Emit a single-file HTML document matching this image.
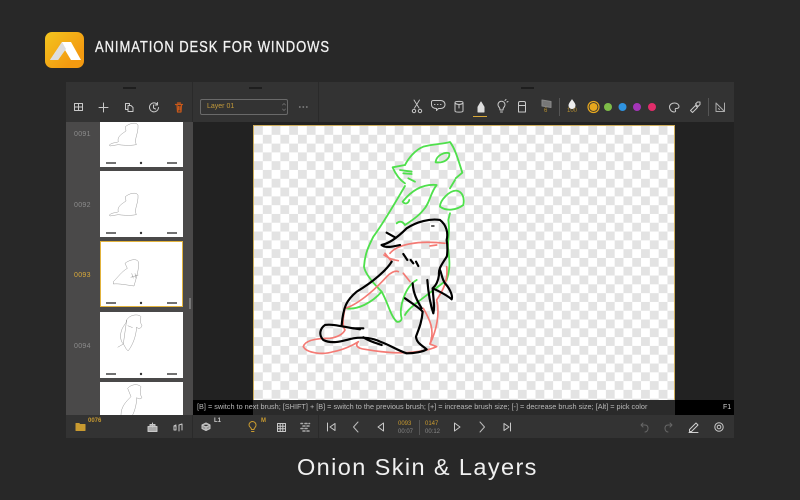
<!DOCTYPE html>
<html><head><meta charset="utf-8">
<style>
html,body{margin:0;padding:0}
body{width:800px;height:500px;background:#282828;position:relative;overflow:hidden;font-family:"Liberation Sans",sans-serif}
div{position:absolute}
.t{white-space:nowrap;line-height:1}
.th{left:100px;width:83px;height:66px;background:#fff}
.lab{left:74px;font-size:7px;color:#8c8c8c;letter-spacing:.3px}
svg{position:absolute;left:0;top:0;overflow:visible}
</style></head><body>
<div style="left:45px;top:32px;width:39px;height:36px;border-radius:7px;background:linear-gradient(135deg,#f3c51f,#f39a10 75%)"></div>
<svg width="800" height="500" viewBox="0 0 800 500">
<path d="M50 60 L62 42 H71 L81 60 H71 L65 50 L58 60Z" fill="#fff"/>
<path d="M50 60 L62 42 L66 49 L58 60Z" fill="#ddd"/>
</svg>
<div class="t" style="left:95px;top:40px;font-size:15.5px;color:#f2f2f2;transform:scaleX(.84);transform-origin:0 0;letter-spacing:1.1px;-webkit-text-stroke:.3px #f2f2f2">ANIMATION DESK FOR WINDOWS</div>
<div class="t" style="left:297px;top:456px;font-size:23.5px;color:#f0f0f0;letter-spacing:1.4px">Onion Skin &amp; Layers</div>

<!-- app -->
<div style="left:66px;top:82px;width:668px;height:40px;background:#333"></div>
<div style="left:192px;top:82px;width:1px;height:40px;background:#2a2a2a"></div>
<div style="left:318px;top:82px;width:1px;height:40px;background:#2a2a2a"></div>
<div style="left:123px;top:87px;width:13px;height:1.5px;background:#1e1e1e"></div>
<div style="left:249px;top:87px;width:13px;height:1.5px;background:#1e1e1e"></div>
<div style="left:521px;top:87px;width:13px;height:1.5px;background:#1e1e1e"></div>
<div style="left:193px;top:122px;width:541px;height:279px;background:#222"></div>
<div style="left:66px;top:122px;width:127px;height:293px;background:#4a4949"></div>
<div style="left:189px;top:298px;width:1.5px;height:11px;background:#777"></div>

<div class="th" style="top:101px;clip-path:inset(21px 0 0 0)"></div>
<div class="th" style="top:171px"></div>
<div class="th" style="top:241px;box-sizing:border-box;border:1.5px solid #e2b33d"></div>
<div class="th" style="top:312px"></div>
<div class="th" style="top:382px;height:33px"></div>
<div class="t lab" style="top:131px">0091</div>
<div class="t lab" style="top:202px">0092</div>
<div class="t lab" style="top:272px;color:#d9a93a">0093</div>
<div class="t lab" style="top:343px">0094</div>

<!-- thumb details -->
<svg width="800" height="500" viewBox="0 0 800 500">
<g fill="none" stroke="#444" stroke-width="1.4">
<path d="M106 163H116M167 163H177M106 233H116M167 233H177M106 303H116M167 303H177M106 374H116M167 374H177"/>
</g>
<g fill="#333"><circle cx="141" cy="163" r="1.2"/><circle cx="141" cy="233" r="1.2"/><circle cx="141" cy="303" r="1.2"/><circle cx="141" cy="374" r="1.2"/></g>
<g fill="none" stroke="#444" stroke-width=".8">
<g transform="translate(66,50) scale(.3333)">
<path d="M130 285C140 276 150 280 157 275C152 260 170 250 180 243L178 230C190 220 210 215 216 225C218 250 203 268 211 284C190 288 165 285 157 284L132 288Z"/>
</g>
<g transform="translate(66,120) scale(.3333)"><path d="M130 285C140 276 150 280 157 275C152 260 170 250 180 243L178 230C190 220 210 215 216 225C218 250 203 268 211 284C190 288 165 285 157 284L132 288Z"/></g>
<g transform="translate(90,240) scale(.3333)">
<path d="M70 125C85 110 95 95 112 85L105 70C120 58 140 55 145 65C148 85 140 110 132 138C110 135 85 130 70 132ZM125 100L130 115M135 100L138 115M122 112L145 105"/>
</g>
<g transform="translate(66,265) scale(.3333)">
<path d="M182 165C190 150 215 145 225 155C222 165 222 172 228 182C225 192 215 192 212 186C210 215 200 240 187 257C180 255 178 245 172 237L155 247M172 237C160 225 162 200 172 185C178 175 182 172 182 165ZM185 182L200 188"/>
<path d="M185 370C195 358 215 355 225 365C222 378 222 390 228 398C222 405 215 400 212 398C212 420 205 440 200 450M185 370L195 395C180 410 165 425 165 450"/>
</g>
</g>
</svg>

<!-- canvas -->
<div style="left:253px;top:125px;width:422px;height:276px;box-sizing:border-box;border:1px solid #cfae5c;border-bottom:0;background:conic-gradient(#fff 25%,#e3e3e3 0 50%,#fff 0 75%,#e3e3e3 0) 0 0/17.6px 17.6px"></div>

<!-- drawing -->
<svg width="800" height="500" viewBox="0 0 800 500">
<g fill="none" stroke-linecap="round" stroke-linejoin="round" transform="translate(290,130) scale(.3333)">
<g stroke="#4fe04c" stroke-width="5.5">
<path d="M345 105C355 85 375 60 400 50C430 42 460 42 480 36C495 55 505 90 517 128L497 145"/>
<path d="M345 105L308 112C318 135 330 150 345 160M330 120L365 125M340 130L365 132M355 145L375 155"/>
<path d="M437 95C440 75 465 65 478 70C480 85 465 100 437 97"/>
<path d="M345 168C320 210 280 280 250 320C235 350 225 370 222 410C225 430 245 455 275 485C295 520 300 555 320 575C330 578 335 570 335 565C325 535 345 470 380 450"/>
<path d="M170 535C200 540 245 520 275 485" />
<path d="M338 215C350 200 385 160 440 165C420 190 420 220 400 240C385 260 360 275 345 285C335 270 325 275 320 280M338 215C345 225 355 220 358 210"/>
<path d="M500 182C480 180 450 210 450 230C470 245 500 240 520 225C525 200 515 185 500 182M480 250L475 270C482 310 470 340 475 360C480 400 480 420 470 450C445 470 410 495 385 515C365 530 350 545 345 555"/>
<path d="M495 150L480 175"/>
</g>
<g stroke="#f47a74" stroke-width="5">
<path d="M40 650C50 670 100 675 130 665C160 660 190 645 205 635C195 645 200 655 225 658C265 665 310 670 350 668C390 665 420 660 440 650L420 642C440 600 450 550 440 510C460 480 475 450 470 410"/>
<path d="M40 650C45 630 80 625 120 625C150 620 160 610 165 600C155 585 160 560 165 535C200 525 250 485 290 440C300 430 315 420 325 425"/>
<path d="M400 535C420 570 435 600 420 642M300 370C320 345 380 330 465 340M282 375C295 385 310 390 325 392M340 430L360 455M285 370L305 395M420 348L440 345"/>
</g>
<g stroke="#000" stroke-width="6.500">
<path d="M275 345C300 340 325 320 350 295C380 275 420 265 450 270C470 285 475 310 470 330C475 360 470 385 470 380C455 405 445 415 447 435C445 450 440 465 428 475C450 485 470 495 485 508C490 495 475 470 465 460C455 445 455 430 450 420"/>
<path d="M290 308L315 322M275 345C285 355 310 350 330 345"/>
<path d="M305 395C290 420 250 455 200 485C170 510 160 530 155 585"/>
<path d="M210 598C175 595 130 580 105 585C90 595 85 615 100 630C130 645 165 630 190 625C220 620 250 625 270 635C300 645 320 660 350 670C375 670 400 665 410 658C395 645 380 640 378 620C385 600 395 580 398 545C390 535 380 530 345 505"/>
<path d="M368 460C370 490 380 510 395 535M412 450C415 490 420 520 430 550C435 530 430 510 428 475"/>
<path d="M340 372L352 390M362 390L370 400M378 395L385 408M190 595L220 595M220 622C240 635 260 640 275 645"/>
<path d="M425 288L432 288" stroke-width="4"/>
</g>
</g>
</svg>

<!-- status -->
<div style="left:193px;top:400px;width:541px;height:15px;background:#000"></div>
<div style="left:253px;top:400px;width:422px;height:15px;background:#2a2a2a"></div>
<div class="t" style="left:197px;top:403px;font-size:7.3px;color:#b8b8b8;white-space:nowrap">[B] = switch to next brush; [SHIFT] + [B] = switch to the previous brush; [+] = increase brush size; [-] = decrease brush size; [Alt] = pick color</div>
<div class="t" style="left:723px;top:404px;font-size:7px;color:#ccc">F1</div>

<!-- bottom -->
<div style="left:66px;top:415px;width:668px;height:23px;background:#333"></div>
<div style="left:192px;top:415px;width:1px;height:23px;background:#2a2a2a"></div>
<div style="left:318px;top:415px;width:1px;height:23px;background:#2a2a2a"></div>

<!-- layer dropdown -->
<div style="left:200px;top:99px;width:88px;height:16px;box-sizing:border-box;border:1px solid #6a6a6a;border-radius:2px"></div>
<div class="t" style="left:207px;top:103px;font-size:7px;color:#c39a3a">Layer 01</div>

<div class="t" style="left:88px;top:418px;font-size:6px;font-weight:bold;color:#c89a30">0076</div>
<div class="t" style="left:214px;top:418px;font-size:6px;font-weight:bold;color:#ccc">L1</div>
<div class="t" style="left:261px;top:418px;font-size:6px;font-weight:bold;color:#c89a30">M</div>
<div class="t" style="left:398px;top:421px;font-size:6px;color:#c89a30">0093</div>
<div class="t" style="left:398px;top:429px;font-size:6px;color:#888">00:07</div>
<div class="t" style="left:425px;top:421px;font-size:6px;color:#c89a30">0147</div>
<div class="t" style="left:425px;top:429px;font-size:6px;color:#888">00:12</div>
<div style="left:419px;top:420px;width:1px;height:15px;background:#555"></div>
<div class="t" style="left:544px;top:108px;font-size:6px;color:#b58e30">6</div>
<div class="t" style="left:567px;top:108px;font-size:6px;color:#b58e30">100</div>
<div style="left:559px;top:98px;width:1px;height:18px;background:#555"></div>
<div style="left:708px;top:98px;width:1px;height:18px;background:#555"></div>
<div style="left:473px;top:115.5px;width:14px;height:1px;background:#d8a838"></div>

<svg width="800" height="500" viewBox="0 0 800 500">
<g fill="none" stroke="#c9c9c9" stroke-width="1" stroke-linecap="round" stroke-linejoin="round">
<!-- top-left -->
<path d="M74.500 103.500h8v7h-8zM78.500 103.500v7M74.500 107h8"/>
<path d="M99 107.500h9M103.500 103v9"/>
<path d="M125.500 103.500h4v2M128 105.500h3l2 2v4h-5zM125.500 103.500v6h2.500"/>
<path d="M157.500 104.500a4.500 4.500 0 1 0 1 3M157.500 102.500v2.500h-2.500M153.500 105v3l2 1"/>
<path d="M175.500 104.500h7M177 104.500l.5 7.500h3.500l.5-7.500M177.500 103h3M178.500 106.500v3.500M180 106.500v3.500" stroke="#c8581a" stroke-width="1.200"/>
<path d="M282.500 105l1.500-1.500 1.500 1.500M282.500 109l1.500 1.500 1.500-1.500" stroke="#777" stroke-width=".7"/>
<path d="M299.500 107h.6M303 107h.6M306.500 107h.6" stroke="#999" stroke-width="1.200"/>
<!-- top right -->
<path d="M414 100l5 8M419.500 100l-5 8" stroke-width=".9"/>
<circle cx="414" cy="111" r="1.700"/><circle cx="420" cy="111" r="1.700"/>
<path d="M433.500 100.500h7c2.500 0 4.500 1.500 4.500 4s-2 4-4.500 4h-2l-2 2v-2c-3 0-5-1.500-5-4s-.5-4 2-4zM434.500 104.500h.5M437.500 104.500h.5M440.500 104.500h.5"/>
<path d="M455 102.500c0-1.500 8-1.500 8 0v8.500c0 1.500-8 1.500-8 0zM455 103c2 2 6 2 8 0M459 105v3"/>
<path d="M478 112v-5l3-5 3 5v5zM481 102v6" fill="#ddd" stroke="#ddd"/>
<path d="M500 110h3M500.500 112h2M498 104.500a3.500 3.500 0 1 1 6.500 2c-1 1-1.500 2-1.500 3.500h-3c0-1.500-.5-2.500-1.500-3.500a3.500 3.500 0 0 1-.5-2zM505 100.500l1-1M507 102l1-.5"/>
<path d="M518.500 103c0-1 .5-1.500 1.500-1.500h4c1 0 1.500.5 1.500 1.500v9h-7zM518.500 105.500h7"/>
<path d="M542 100l9 1.500v6l-9-1.500z" fill="#777" stroke="#888"/>
</g>
<path d="M572 99c1 2 3.500 4 3.500 6.500a3.500 3.500 0 0 1-7 0c0-2.500 2.500-4.500 3.500-6.500z" fill="#eee"/>
<circle cx="593.500" cy="107" r="5.500" fill="none" stroke="#e8a81e" stroke-width="1.200"/>
<circle cx="593.500" cy="107" r="4" fill="#e8a81e"/>
<circle cx="608" cy="107" r="4" fill="#7ebc48"/>
<circle cx="622.500" cy="107" r="4" fill="#2f93e0"/>
<circle cx="637" cy="107" r="4" fill="#a435b8"/>
<circle cx="652" cy="107" r="4" fill="#e12d6a"/>
<g fill="none" stroke="#c9c9c9" stroke-width="1" stroke-linecap="round" stroke-linejoin="round">
<path d="M669.500 107c0-2.500 2.500-4 5-4s4.500 1.500 4.500 3.500-2 2-3 2-1 1-.5 2c.5 1-.5 1.500-1.500 1.500-2.500 0-4.500-2.500-4.500-5z"/>
<path d="M690.500 110.500l5-5 2 2-5 5zM695.500 104l2-2 2.500 0 0 2.500-2 2z"/>
<path d="M716 103l8.500 8.500H716zM724.500 103v8.500M718.500 108.500l1 1" stroke="#aaa"/>
<!-- bottom -->
<path d="M76 423.500h3l1 1h5v6h-9z" fill="#c89a30" stroke="#c89a30"/>
<path d="M148 431.500v-5h9v5zM150 426.500v-2h5v2M152.500 423v4" fill="#aaa"/>
<path d="M174 430v-4h2v4zM179 431v-6l3-1v6M174 426l2-1"/>
<path d="M202 425l4-2 4 2-4 2zM202 425v3.500l4 2 4-2V425M206 427v3" fill="#999"/>
<path d="M249 425a3.500 3.500 0 1 1 6 2.500c-.7.800-1 1.200-1 2h-2.500c0-.8-.3-1.200-1-2-.8-.7-1.500-1.500-1.500-2.500zM251.500 431.500h2.500" stroke="#c89a30"/>
<path d="M277.500 423.500h8v8h-8zM277.500 426.200h8M277.500 428.800h8M280.200 423.500v8M282.800 423.500v8"/>
<path d="M301 423.500h1.500M305 423.500h2M309 423.500h.5M303 426h2M307 426h2M301 428.500h2M305 428.500h2M303 431h2M307 431h2" stroke-width="1.600" stroke="#aaa"/>
<path d="M327.500 423v8M335 423.500l-5 3.500 5 3.500z"/>
<path d="M358 422l-4.500 5 4.500 5" stroke="#bbb"/>
<path d="M383.500 423v8l-5.500-4z"/>
<path d="M454.500 423v8l5.500-4z"/>
<path d="M480 422l4.500 5-4.500 5" stroke="#bbb"/>
<path d="M504 423.500l5 3.500-5 3.500zM510.500 423v8"/>
<path d="M641 425h4c2 0 3 1.500 3 3.500s-1.500 3.500-3 3.500M641 425l2-2M641 425l2 2" stroke="#666"/>
<path d="M672 425h-4c-2 0-3 1.500-3 3.500s1.500 3.500 3 3.500M672 425l-2-2M672 425l-2 2" stroke="#666"/>
<path d="M689.500 429.500l6.500-6.500 2 2-6.500 6.500h-2zM689 432.500h9" stroke="#d0d0d0"/>
<circle cx="719" cy="427" r="4.200"/><circle cx="719" cy="427" r="1.800"/>
</g>
</svg>
</body></html>
